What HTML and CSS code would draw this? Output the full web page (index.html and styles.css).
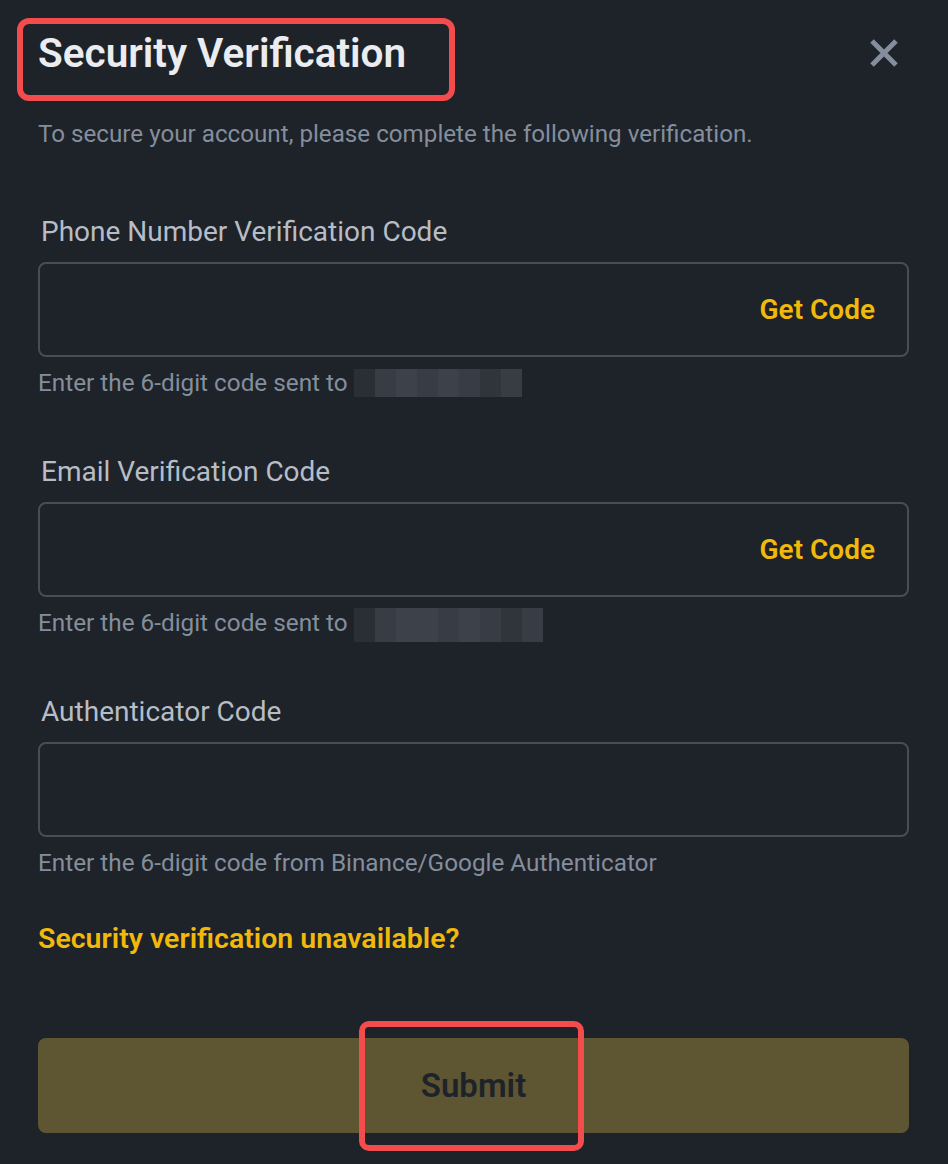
FILE: index.html
```html
<!DOCTYPE html>
<html lang="en">
<head>
    <meta charset="UTF-8">
    <meta name="viewport" content="width=device-width, initial-scale=1.0">
    <title>Security Verification</title>
    <link rel="stylesheet" href="styles.css">
</head>
<body>
    <div class="modal">
        <!-- Header -->
        <div class="modal-header">
            <h1 class="title">Security Verification</h1>
            <button class="close-btn" aria-label="Close">
                <svg width="32" height="32" viewBox="0 0 32 32">
                    <path d="M4 4 L28 28 M28 4 L4 28" stroke="#848e9c" stroke-width="5" fill="none"/>
                </svg>
            </button>
        </div>
        <p class="subtitle">To secure your account, please complete the following verification.</p>

        <!-- Phone -->
        <div class="field">
            <label class="field-label">Phone Number Verification Code</label>
            <div class="input-box">
                <input type="text" autocomplete="off" />
                <span class="get-code">Get Code</span>
            </div>
            <div class="hint">Enter the 6-digit code sent to <span class="redacted r1"><i></i><i class="b"></i><i class="c"></i><i class="b"></i><i class="c"></i><i class="b"></i><i class="a"></i><i class="b"></i></span></div>
        </div>

        <!-- Email -->
        <div class="field">
            <label class="field-label">Email Verification Code</label>
            <div class="input-box">
                <input type="text" autocomplete="off" />
                <span class="get-code">Get Code</span>
            </div>
            <div class="hint">Enter the 6-digit code sent to <span class="redacted r2"><i></i><i class="b"></i><i class="c"></i><i class="c"></i><i class="b"></i><i class="c"></i><i class="b"></i><i class="a"></i><i class="b"></i></span></div>
        </div>

        <!-- Authenticator -->
        <div class="field">
            <label class="field-label">Authenticator Code</label>
            <div class="input-box">
                <input type="text" autocomplete="off" />
            </div>
            <div class="hint">Enter the 6-digit code from Binance/Google Authenticator</div>
        </div>

        <a class="unavailable" href="#">Security verification unavailable?</a>

        <button class="submit-btn">Submit<span class="highlight"></span></button>
    </div>
</body>
</html>
```

FILE: styles.css
```css
body {
    font-family: Roboto, "Noto Sans", sans-serif;
    margin: 0;
    padding: 0;
    background-color: #1e2229;
    height: 100vh;
    overflow: hidden;
}

.modal {
    display: flex;
    flex-direction: column;
    padding: 18px 39px 0 38px;
}

.modal-header {
    display: flex;
    justify-content: space-between;
    align-items: flex-start;
}

.title {
    margin: 0 0 0 -21px;
    padding: 0 43px 12px 15px;
    border: 6px solid #f44c4c;
    border-radius: 12px;
    font-size: 40.5px;
    font-weight: 600;
    line-height: 59px;
    color: #eaecef;
}

.close-btn {
    margin: 19px 9px 0 0;
    padding: 0;
    border: none;
    background: none;
    width: 32px;
    height: 32px;
    cursor: pointer;
}

.subtitle {
    margin: 15px 0 0 0;
    font-size: 24.2px;
    line-height: 36px;
    color: #848e9c;
}

.field {
    display: flex;
    flex-direction: column;
    margin-top: 62px;
}

.field + .field {
    margin-top: 55px;
}

.field-label {
    padding-left: 3px;
    font-size: 28px;
    line-height: 36px;
    color: #b7bdc6;
}

.input-box {
    display: flex;
    align-items: center;
    height: 95px;
    box-sizing: border-box;
    margin-top: 12px;
    border: 2px solid #474d57;
    border-radius: 8px;
    padding: 0 32px 0 20px;
}

.input-box input {
    flex: 1;
    background: none;
    border: none;
    outline: none;
    color: #eaecef;
    font-family: inherit;
    font-size: 28px;
}

.get-code {
    font-size: 28px;
    font-weight: 600;
    color: #f0b90b;
    cursor: pointer;
}

.hint {
    display: flex;
    align-items: center;
    margin-top: 10px;
    height: 32px;
    font-size: 24.3px;
    line-height: 32px;
    color: #848e9c;
    white-space: pre;
}

.redacted {
    display: inline-flex;
    height: 28px;
    background-color: #262a31;
}

.redacted i {
    display: block;
    width: 21px;
    height: 100%;
    background-color: #2a2e35;
}

.redacted i.a { background-color: #30343b; }
.redacted i.b { background-color: #383c44; }
.redacted i.c { background-color: #3d424a; }

.r2 {
    height: 34px;
    margin-top: 4px;
}

.unavailable {
    margin-top: 42px;
    font-size: 28.5px;
    font-weight: 600;
    line-height: 36px;
    color: #f0b90b;
    text-decoration: none;
    align-self: flex-start;
}

.submit-btn {
    position: relative;
    margin-top: 81px;
    height: 95px;
    border: none;
    border-radius: 8px;
    background-color: #5e5632;
    color: #1e2329;
    font-family: inherit;
    font-size: 33px;
    font-weight: 600;
    cursor: pointer;
}

/* red annotation box over the button */
.submit-btn .highlight {
    position: absolute;
    top: -17px;
    bottom: -18px;
    left: 321px;
    width: 213px;
    border: 6px solid #f44c4c;
    border-radius: 10px;
}
```
